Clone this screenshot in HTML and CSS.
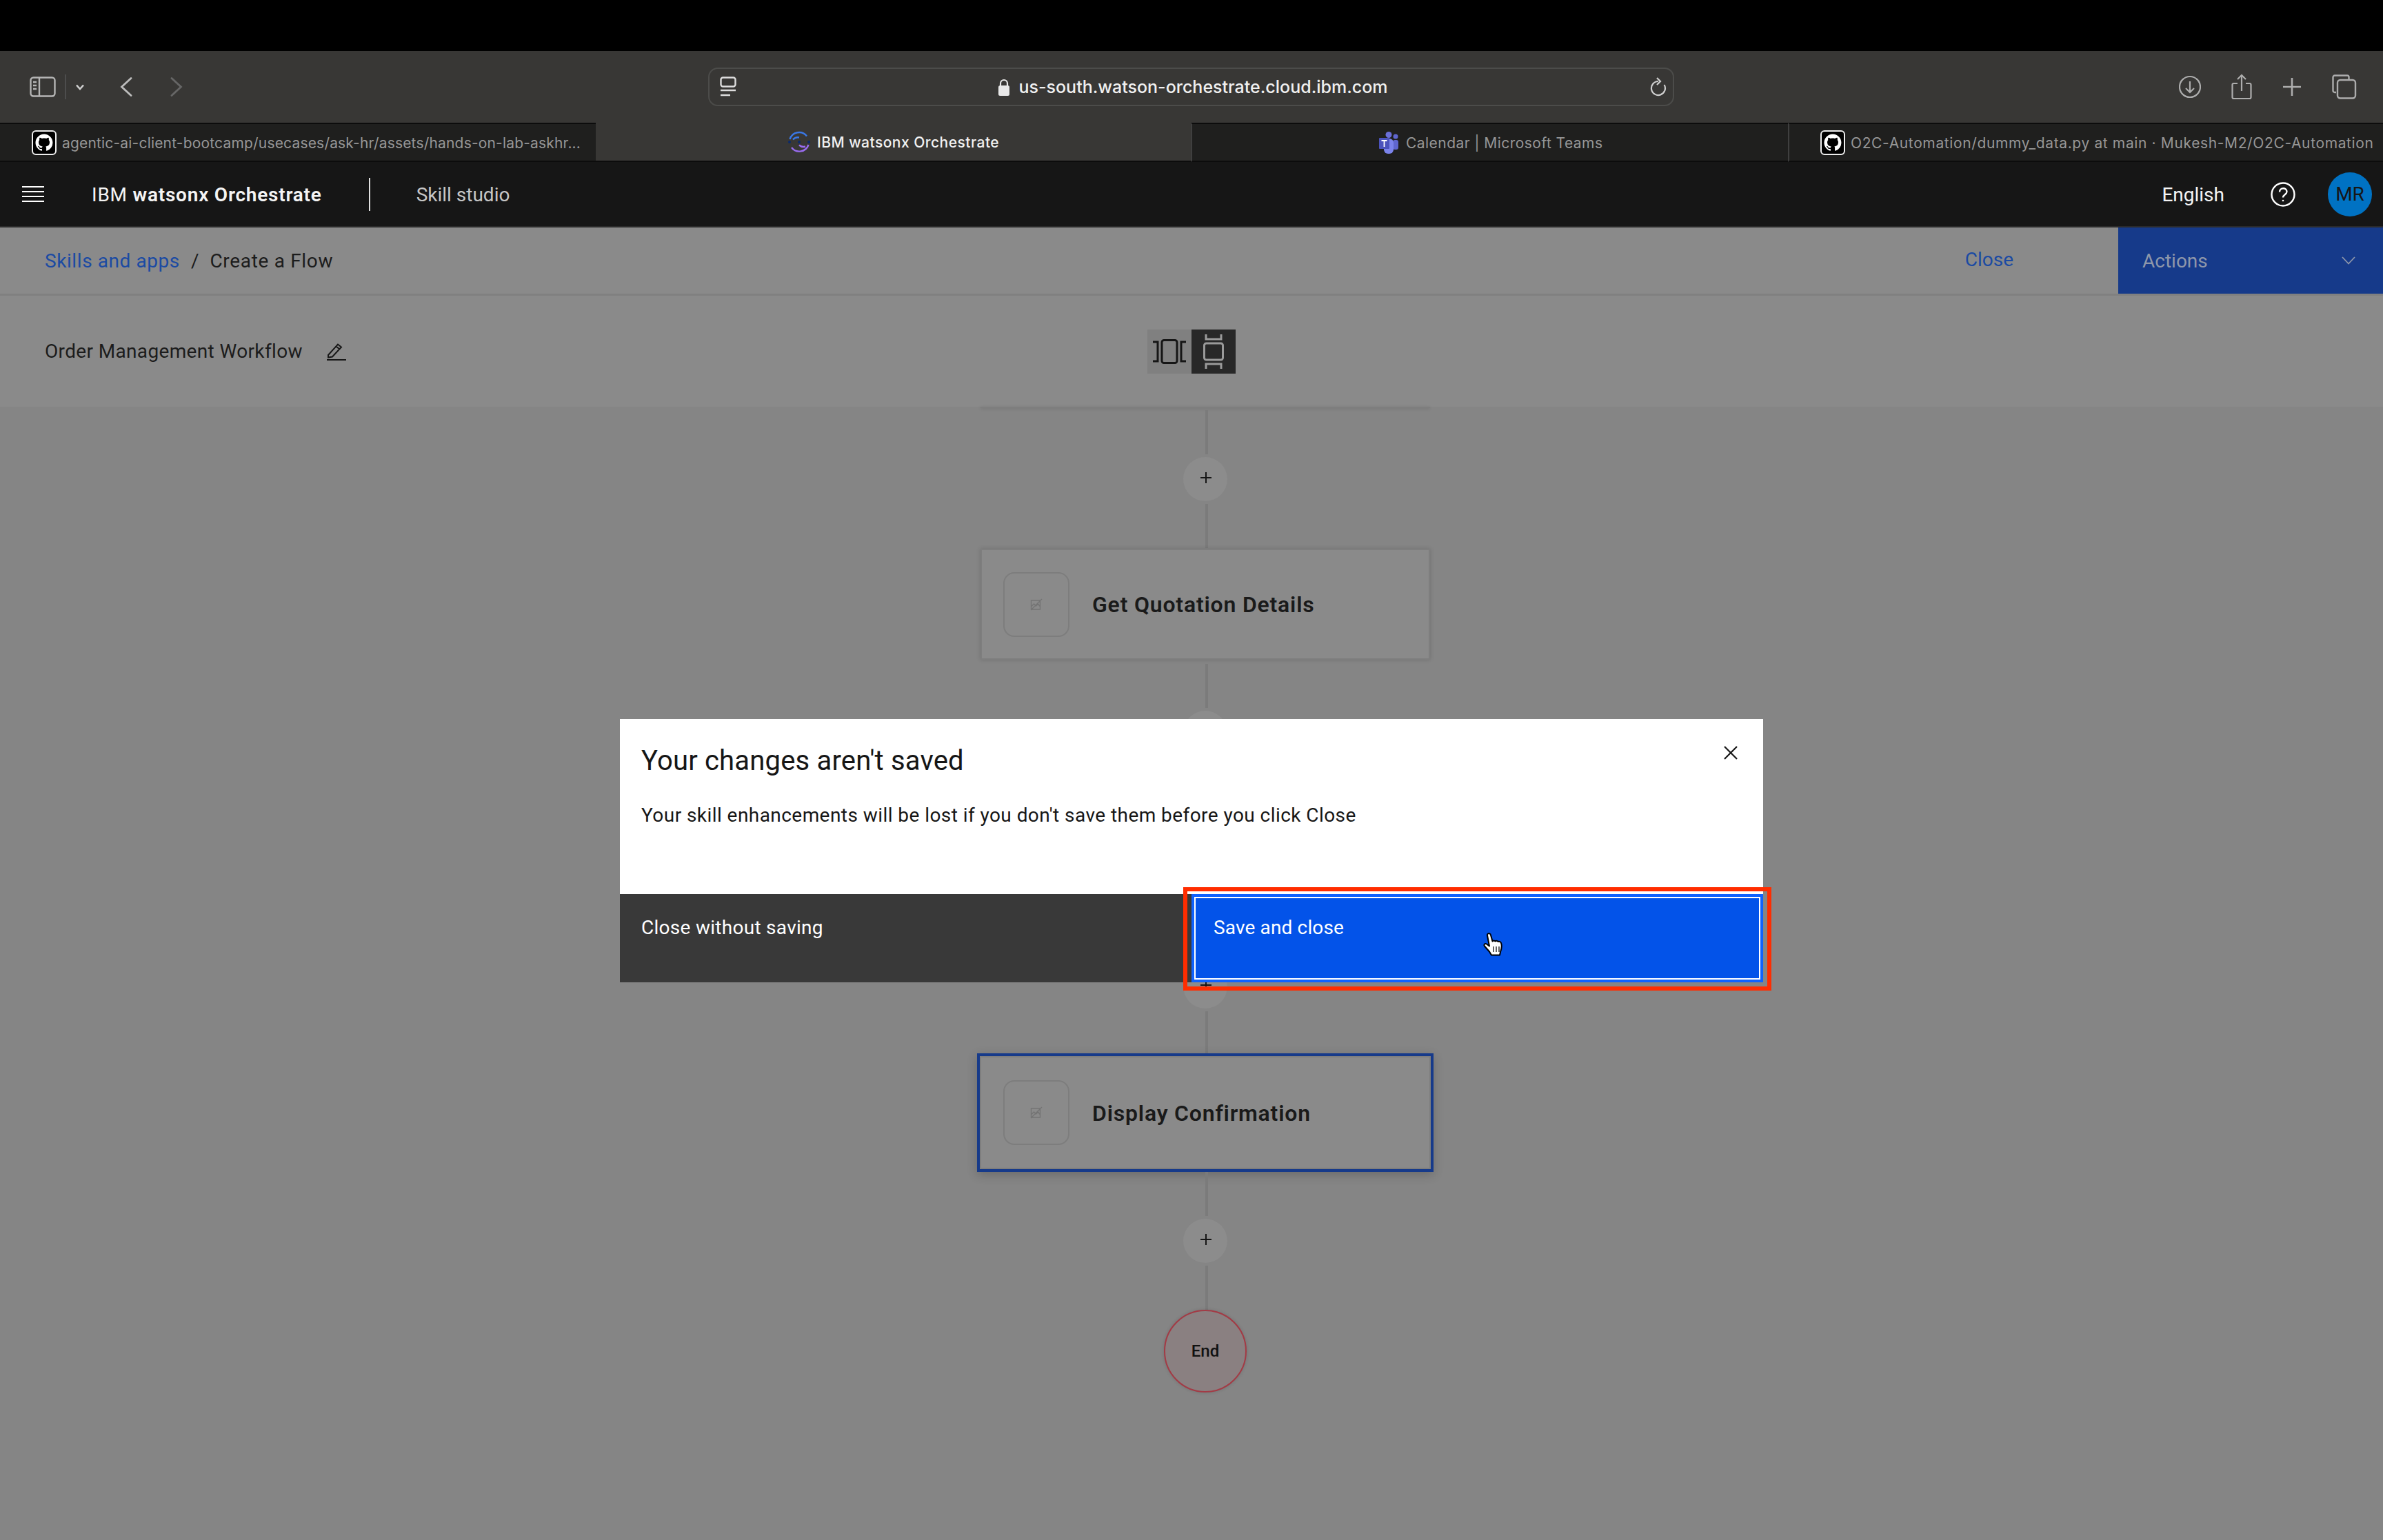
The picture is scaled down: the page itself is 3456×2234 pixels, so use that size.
FILE: index.html
```html
<!DOCTYPE html>
<html lang="en">
<head>
    <meta charset="UTF-8">
    <title>IBM watsonx Orchestrate</title>
    <link rel="stylesheet" href="styles.css">
</head>
<body>
    <svg class="defs" width="0" height="0">
        <symbol id="gh" viewBox="0 0 36 36">
            <rect x="1" y="1" width="34" height="34" rx="5" fill="#000" stroke="#eee" stroke-width="2"/>
            <path transform="translate(5.5 5.5) scale(1.56)" fill="#fff" d="M8 0C3.58 0 0 3.58 0 8c0 3.54 2.29 6.53 5.47 7.59.4.07.55-.17.55-.38 0-.19-.01-.82-.01-1.49-2.01.37-2.53-.49-2.69-.94-.09-.23-.48-.94-.82-1.13-.28-.15-.68-.52-.01-.53.63-.01 1.08.58 1.23.82.72 1.21 1.87.87 2.33.66.07-.52.28-.87.51-1.07-1.78-.2-3.64-.89-3.64-3.95 0-.87.31-1.59.82-2.15-.08-.2-.36-1.02.08-2.12 0 0 .67-.21 2.2.82.64-.18 1.32-.27 2-.27.68 0 1.36.09 2 .27 1.53-1.04 2.2-.82 2.2-.82.44 1.1.16 1.92.08 2.12.51.56.82 1.27.82 2.15 0 3.07-1.87 3.75-3.65 3.95.29.25.54.73.54 1.48 0 1.07-.01 1.93-.01 2.2 0 .21.15.46.55.38A8.013 8.013 0 0016 8c0-4.42-3.58-8-8-8z"/>
        </symbol>
        <symbol id="plus" viewBox="0 0 16 16">
            <path d="M8 0v16M0 8h16" stroke="#161616" stroke-width="2" fill="none"/>
        </symbol>
        <symbol id="noimg" viewBox="0 0 18 18">
            <path d="M1.500 3h13v13h-13zM1.500 12l4-4 3 3 3-3 3 4M1 17L17 1" stroke="#747474" stroke-width="1.400" fill="none"/>
        </symbol>
    </svg>

    <div class="topstrip"></div>

    <div class="toolbar">
        <div class="toolbar-left">
            <svg class="sidebar-icon" width="38" height="30" viewBox="0 0 38 30" fill="none" stroke="#b5b5b5" stroke-width="2.400">
                <rect x="1.500" y="1.500" width="35" height="27" rx="4"/>
                <path d="M14 2v26M5 8h5M5 13h5M5 18h5"/>
            </svg>
            <span class="toolbar-sep"></span>
            <svg class="small-chev" width="14" height="9" viewBox="0 0 14 9" fill="none" stroke="#cfcfcf" stroke-width="2.600"><path d="M2 1.500l5 5.500 5-5.500"/></svg>
            <svg class="nav-back" width="18" height="28" viewBox="0 0 18 28" fill="none" stroke="#bdbdbd" stroke-width="2.800" stroke-linecap="round"><path d="M16 1.500L2.500 14 16 26.500"/></svg>
            <svg class="nav-fwd" width="18" height="28" viewBox="0 0 18 28" fill="none" stroke="#666" stroke-width="2.800" stroke-linecap="round"><path d="M2 1.500L15.500 14 2 26.500"/></svg>
        </div>
        <div class="addressbar">
            <svg class="reader-icon" width="24" height="30" viewBox="0 0 24 30" fill="none" stroke="#ddd" stroke-width="2.400">
                <rect x="1.500" y="1.500" width="21" height="13" rx="3"/>
                <path d="M1 20h22M1 27h14"/>
            </svg>
            <div class="url">
                <svg width="18" height="25" viewBox="0 0 18 25"><path d="M4 11V7a5 5 0 0110 0v4" fill="none" stroke="#e8e8e8" stroke-width="2.200"/><rect x="1" y="10" width="16" height="15" rx="2.500" fill="#e8e8e8"/></svg>
                <span>us-south.watson-orchestrate.cloud.ibm.com</span>
            </div>
            <svg class="reload-icon" width="26" height="28" viewBox="0 0 26 28" fill="none" stroke="#cfcfcf" stroke-width="2.200">
                <path d="M13 6a10 10 0 108.600 5"/>
                <path d="M11 1l5 5-5 5"/>
            </svg>
        </div>
        <div class="toolbar-right">
            <svg width="32" height="34" viewBox="0 0 32 34" fill="none" stroke="#adadad" stroke-width="2.200">
                <circle cx="16" cy="17" r="15"/>
                <path d="M16 9v16M10 19l6 6 6-6"/>
            </svg>
            <svg width="30" height="38" viewBox="0 0 30 38" fill="none" stroke="#adadad" stroke-width="2.200">
                <path d="M9 14H3.500a2 2 0 00-2 2v18a2 2 0 002 2h23a2 2 0 002-2V16a2 2 0 00-2-2H21"/>
                <path d="M15 25V2M9 8l6-6 6 6"/>
            </svg>
            <svg width="28" height="28" viewBox="0 0 28 28" fill="none" stroke="#adadad" stroke-width="2.600"><path d="M14 1v26M1 14h26"/></svg>
            <svg width="36" height="36" viewBox="0 0 36 36" fill="none" stroke="#adadad" stroke-width="2.400">
                <path d="M6 26H4a2.500 2.500 0 01-2.500-2.500V4A2.500 2.500 0 014 1.500h18A2.500 2.500 0 0124.500 4v3"/>
                <rect x="8" y="8" width="26" height="26.500" rx="4"/>
            </svg>
        </div>
    </div>

    <div class="tabs">
        <div class="tab tab-gh-left">
            <svg width="36" height="36"><use href="#gh"/></svg>
            <span>agentic-ai-client-bootcamp/usecases/ask-hr/assets/hands-on-lab-askhr...</span>
        </div>
        <div class="tab tab-active">
            <svg width="32" height="32" viewBox="0 0 32 32" fill="none" stroke-width="2.400">
                <defs>
                    <linearGradient id="wx" x1="0" y1="0" x2="0" y2="1">
                        <stop offset="0" stop-color="#2f6fe0"/>
                        <stop offset="1" stop-color="#9a6cf0"/>
                    </linearGradient>
                </defs>
                <path d="M2.500 12A14 14 0 0127 7.500" stroke="#3a78e6"/>
                <path d="M7 12.500a9.500 9.500 0 019-3" stroke="#3a78e6"/>
                <path d="M5 24A14 14 0 0029.500 20" stroke="#9a6cf0"/>
                <path d="M16 20.500a9.500 9.500 0 009 2" stroke="#9a6cf0"/>
                <circle cx="2" cy="16" r="2" fill="#0b2a6b"/>
                <circle cx="16" cy="16" r="2" fill="#0b2a6b"/>
                <circle cx="30" cy="16" r="2" fill="#0b2a6b"/>
            </svg>
            <span>IBM watsonx Orchestrate</span>
        </div>
        <div class="tab tab-teams">
            <svg width="28" height="32" viewBox="0 0 28 32">
                <circle cx="14" cy="4.500" r="4.500" fill="#6a6fd8"/>
                <circle cx="24" cy="7" r="3.500" fill="#5f66cf"/>
                <rect x="20" y="12" width="8" height="14" rx="3" fill="#5f66cf"/>
                <rect x="7" y="10" width="14" height="22" rx="6" fill="#7b83eb"/>
                <rect x="0" y="9" width="15" height="16" rx="1" fill="#4b53bc"/>
                <path d="M3.500 13h8M7.500 13v9" stroke="#fff" stroke-width="1.800"/>
            </svg>
            <span>Calendar | Microsoft Teams</span>
        </div>
        <div class="tab tab-gh-right">
            <svg width="36" height="36"><use href="#gh"/></svg>
            <span>O2C-Automation/dummy_data.py at main · Mukesh-M2/O2C-Automation</span>
        </div>
    </div>

    <header class="appnav">
        <div class="hamburger"><i></i><i></i><i></i><i></i></div>
        <div class="brand">IBM <b>watsonx Orchestrate</b></div>
        <span class="brand-sep"></span>
        <div class="section-name">Skill studio</div>
        <div class="appnav-right">
            <span class="lang">English</span>
            <svg class="help" width="36" height="36" viewBox="0 0 36 36" fill="none" stroke="#fff" stroke-width="2.400">
                <circle cx="18" cy="18" r="16.500"/>
                <path d="M13 14.500c0-7 10.500-7 10.500-.5 0 4.500-5.500 4-5.500 8.500"/>
                <circle cx="18" cy="27" r="1.300" fill="#fff" stroke="none"/>
            </svg>
            <span class="avatar">MR</span>
        </div>
    </header>

    <div class="crumbbar">
        <nav class="crumbs">
            <a href="#">Skills and apps</a>
            <span class="crumb-slash">/</span>
            <span class="crumb-current">Create a Flow</span>
        </nav>
        <a href="#" class="close-link">Close</a>
        <div class="actions-btn">
            <span>Actions</span>
            <svg width="20" height="12" viewBox="0 0 20 12" fill="none" stroke="#8e97aa" stroke-width="1.800"><path d="M1 1l9 9.500L19 1"/></svg>
        </div>
    </div>

    <div class="titlebar">
        <div class="flow-name">
            <span>Order Management Workflow</span>
            <svg width="28" height="26" viewBox="0 0 28 26" fill="none" stroke="#161616" stroke-width="2">
                <path d="M2 18L16 2.500l5 4L8 20.500l-6 1zM13.500 5.500l5 4"/>
                <path d="M0 25h28"/>
            </svg>
        </div>
        <div class="orient">
            <div class="orient-btn">
                <svg width="48" height="36" viewBox="0 0 48 36" fill="none" stroke="#161616" stroke-width="3">
                    <path d="M0 4h7v28H0"/>
                    <rect x="13" y="1.500" width="22" height="33" rx="3"/>
                    <path d="M48 4h-7v28h7"/>
                </svg>
            </div>
            <div class="orient-btn orient-on">
                <svg width="30" height="50" viewBox="0 0 30 50" fill="none" stroke="#9a9a9a" stroke-width="3">
                    <path d="M4 0v7h22V0"/>
                    <rect x="1.500" y="13" width="27" height="24" rx="3"/>
                    <path d="M4 50v-7h22v7"/>
                </svg>
            </div>
        </div>
    </div>

    <main class="canvas">
        <div class="card-edge"></div>
        <div class="wire"></div>
        <div class="add-node"><svg width="16" height="16"><use href="#plus"/></svg></div>
        <div class="wire"></div>
        <div class="card">
            <div class="card-thumb"><svg width="18" height="18"><use href="#noimg"/></svg></div>
            <div class="card-title">Get Quotation Details</div>
        </div>
        <div class="wire wire-after"></div>
        <div class="add-node"><svg width="16" height="16"><use href="#plus"/></svg></div>
        <div class="wire"></div>
        <div class="card"></div>
        <div class="wire wire-after"></div>
        <div class="add-node"><svg width="16" height="16"><use href="#plus"/></svg></div>
        <div class="wire wire-short"></div>
        <div class="card card-selected">
            <div class="card-thumb"><svg width="18" height="18"><use href="#noimg"/></svg></div>
            <div class="card-title">Display Confirmation</div>
        </div>
        <div class="wire"></div>
        <div class="add-node"><svg width="16" height="16"><use href="#plus"/></svg></div>
        <div class="wire"></div>
        <div class="end-node">End</div>
    </main>

    <!-- unsaved changes dialog -->
    <section class="modal">
        <div class="modal-body">
            <h2>Your changes aren't saved</h2>
            <p>Your skill enhancements will be lost if you don't save them before you click Close</p>
            <svg class="modal-x" width="20" height="20" viewBox="0 0 20 20" fill="none" stroke="#161616" stroke-width="2.200"><path d="M1 1l18 18M19 1L1 19"/></svg>
        </div>
        <div class="modal-foot">
            <button class="btn-dark">Close without saving</button>
            <button class="btn-blue">Save and close</button>
        </div>
    </section>

    <div class="highlight"></div>

    <svg class="hand" width="30" height="34" viewBox="0 0 30 34">
        <path d="M7 1.500c1.500-1 3.500 0 4 2l2.500 9c1-1.500 3-1.500 4 0 1-1 3-1 4 .5 1.500-.8 3.500 0 4.500 2 1.500 4 .5 9-1 13l-1 4.500H12l-3-5-7-8c-1.500-2 .5-4.500 3-3l4 3L6 4c-.3-1 .3-2 1-2.500z" fill="#fff" stroke="#000" stroke-width="2" stroke-linejoin="round"/>
        <path d="M15 20v8M19 20v8M23 20v8" stroke="#333" stroke-width="1.500"/>
    </svg>
</body>
</html>
```

FILE: styles.css
```css
* {
    box-sizing: border-box;
}
body {
    font-family: Roboto, Arial, sans-serif;
    background-color: #858585;
    margin: 0;
    width: 3456px;
    height: 2234px;
    overflow: hidden;
    position: relative;
    color: #161616;
}
a {
    text-decoration: none;
}
.defs {
    position: absolute;
}
.topstrip {
    height: 74px;
    background-color: #000;
}

/* browser toolbar */
.toolbar {
    height: 104px;
    background-color: #383735;
    display: flex;
    align-items: center;
}
.toolbar-left {
    width: 1027px;
    display: flex;
    align-items: center;
    padding-left: 43px;
}
.toolbar-sep {
    width: 2px;
    height: 36px;
    background-color: #4d4d4d;
    margin-left: 13px;
}
.small-chev {
    margin-left: 13px;
}
.nav-back {
    margin-left: 51px;
}
.nav-fwd {
    margin-left: 55px;
}
.addressbar {
    width: 1401px;
    height: 56px;
    border: 2px solid #4c4c4a;
    border-radius: 14px;
    display: flex;
    align-items: center;
    padding: 0 8px 0 15px;
}
.url {
    flex: 1;
    display: flex;
    align-items: center;
    justify-content: center;
    gap: 12px;
    font-family: Inter, Arial, sans-serif;
    font-size: 25px;
    font-weight: 500;
    color: #f0f0f0;
}
.toolbar-right {
    flex: 1;
    display: flex;
    align-items: center;
    gap: 44px;
    padding-left: 732px;
}

/* browser tabs */
.tabs {
    height: 57px;
    display: grid;
    grid-template-columns: 864px 863px 866px 863px;
    font-family: Inter, Arial, sans-serif;
    font-size: 21px;
    color: #969696;
}
.tab {
    background-color: #1f1f1e;
    display: flex;
    align-items: center;
    border-top: 2px solid #0c0c0c;
    border-bottom: 2px solid #0c0c0c;
    border-left: 2px solid #3f3f3f;
    white-space: nowrap;
    overflow: hidden;
}
.tab span {
    margin-left: 8px;
    padding-top: 2px;
}
.tab-gh-left {
    padding-left: 46px;
    border-left: none;
    letter-spacing: 0.18px;
}
.tab-active {
    background-color: #383735;
    color: #f2f2f2;
    font-weight: 500;
    padding-left: 279px;
    border-left: none;
    border-top: none;
    letter-spacing: 0.48px;
}
.tab-active span {
    margin-left: 10px;
}
.tab-teams {
    padding-left: 271px;
    letter-spacing: 0.46px;
}
.tab-teams span {
    margin-left: 11px;
}
.tab-gh-right {
    padding-left: 45px;
    letter-spacing: 0.63px;
}

/* ibm top bar */
.appnav {
    height: 95px;
    background-color: #161616;
    border-bottom: 2px solid #2b2b2b;
    display: flex;
    align-items: center;
    color: #f4f4f4;
    font-size: 28px;
}
.hamburger {
    width: 32px;
    height: 24px;
    margin-left: 32px;
    display: flex;
    flex-direction: column;
    justify-content: space-between;
}
.hamburger i {
    height: 2px;
    background-color: #fff;
}
.brand {
    margin-left: 69px;
    letter-spacing: 0.77px;
    padding-top: 1px;
}
.brand b {
    font-weight: 600;
}
.brand-sep {
    width: 2px;
    height: 48px;
    background-color: #e0e0e0;
    margin-left: 68px;
}
.section-name {
    margin-left: 67px;
    color: #c6c6c6;
    padding-top: 1px;
}
.appnav-right {
    margin-left: auto;
    display: flex;
    align-items: center;
    padding-right: 16px;
}
.lang {
    padding-top: 1px;
}
.help {
    margin-left: 67px;
}
.avatar {
    width: 64px;
    height: 64px;
    border-radius: 50%;
    background-color: #0072c3;
    color: #161616;
    margin-left: 47px;
    display: flex;
    align-items: center;
    justify-content: center;
}

/* breadcrumb row */
.crumbbar {
    height: 99px;
    background-color: #8a8a8a;
    border-bottom: 3px solid #808080;
    display: flex;
    font-size: 28px;
}
.crumbs {
    flex: 1;
    display: flex;
    align-items: center;
    padding-left: 65px;
    color: #1c1c1c;
}
.crumbs a {
    color: #1b4aa3;
    letter-spacing: 0.58px;
}
.crumb-slash {
    margin: 0 16px;
}
.crumb-current {
    letter-spacing: 0.67px;
}
.close-link {
    color: #1b4aa3;
    margin: 30px 152px 0 0;
}
.actions-btn {
    width: 384px;
    height: 96px;
    background-color: #163a8a;
    color: #8e97aa;
    display: flex;
    align-items: center;
    justify-content: space-between;
    padding: 0 40px 0 35px;
}

/* flow name + orientation toggle */
.titlebar {
    height: 161px;
    background-color: #8a8a8a;
    display: grid;
    grid-template-columns: 1fr auto 1fr;
    align-items: center;
    font-size: 28px;
    color: #1c1c1c;
}
.flow-name {
    display: flex;
    align-items: center;
    gap: 35px;
    padding-left: 65px;
    letter-spacing: 0.35px;
}
.orient {
    display: flex;
}
.orient-btn {
    width: 64px;
    height: 64px;
    background-color: #808080;
    display: flex;
    align-items: center;
    justify-content: center;
}
.orient-on {
    background-color: #282828;
}

/* the flow itself */
.canvas {
    display: flex;
    flex-direction: column;
    align-items: center;
    padding-left: 40px;
}
.card-edge {
    width: 652px;
    height: 2px;
    background-color: #7e7e7e;
    box-shadow: 0 1px 4px rgba(0, 0, 0, 0.15);
    margin-bottom: 3px;
}
.wire {
    width: 4px;
    height: 64px;
    background-color: #7b7b7b;
    margin-left: 4px;
    flex-shrink: 0;
}
.wire-after {
    margin-top: 6px;
}
.wire-short {
    height: 61px;
}
.add-node {
    width: 64px;
    height: 64px;
    border-radius: 50%;
    background-color: #8c8c8c;
    margin: 4px 0;
    display: flex;
    align-items: center;
    justify-content: center;
    padding: 0 0 4px 2px;
    flex-shrink: 0;
}
.card {
    width: 652px;
    height: 161px;
    margin-top: 1px;
    background-color: #8a8a8a;
    border: 2px solid #7e7e7e;
    box-shadow: 0 0 6px rgba(0, 0, 0, 0.16);
    display: flex;
    align-items: center;
    padding-left: 31px;
    flex-shrink: 0;
}
.card-selected {
    width: 662px;
    height: 172px;
    margin-top: 0;
    border: 4px solid #163a8a;
    outline: 2px solid #7e7e7e;
    outline-offset: -6px;
    padding-left: 34px;
    box-shadow: 0 4px 14px rgba(0, 0, 0, 0.2);
}
.card-thumb {
    width: 96px;
    height: 94px;
    border: 2px solid #7d7d7d;
    border-radius: 16px;
    display: flex;
    align-items: center;
    justify-content: center;
}
.card-title {
    font-size: 32px;
    font-weight: 600;
    letter-spacing: 0.8px;
    color: #1a1a1a;
    margin-left: 33px;
    padding-top: 1px;
}
.end-node {
    width: 120px;
    height: 120px;
    border-radius: 50%;
    background-color: #8a8081;
    border: 2px solid #a33a45;
    box-shadow: 0 0 5px rgba(0, 0, 0, 0.15);
    display: flex;
    align-items: center;
    justify-content: center;
    font-size: 24px;
    font-weight: 500;
    color: #111;
    flex-shrink: 0;
}

/* modal */
.modal {
    position: absolute;
    left: 899px;
    top: 1043px;
    width: 1658px;
    height: 382px;
    background-color: #fff;
    display: flex;
    flex-direction: column;
}
.modal-body {
    flex: 1;
    position: relative;
    padding: 33px 31px 0;
}
.modal-body h2 {
    margin: 0;
    font-size: 40px;
    line-height: 56px;
    font-weight: 400;
    letter-spacing: 0.18px;
}
.modal-body p {
    margin: 31px 0 0;
    font-size: 28px;
    line-height: 40px;
    letter-spacing: 0.44px;
}
.modal-x {
    position: absolute;
    top: 39px;
    right: 37px;
}
.modal-foot {
    height: 128px;
    display: grid;
    grid-template-columns: 829px 829px;
}
.modal-foot button {
    border: none;
    margin: 0;
    font-family: inherit;
    font-size: 28px;
    line-height: 40px;
    color: #fff;
    text-align: left;
}
.btn-dark {
    background-color: #393939;
    padding: 29px 31px 59px;
    letter-spacing: 0.28px;
}
.modal-foot .btn-blue {
    background-color: #0353e9;
    border: 4px solid #0f62fe;
    outline: 2px solid #fff;
    outline-offset: -6px;
    padding: 25px 28px 55px;
    letter-spacing: 0.15px;
}

/* annotation over the screenshot */
.highlight {
    position: absolute;
    left: 1716px;
    top: 1287px;
    width: 853px;
    height: 150px;
    border: 6px solid #ff2d00;
}
.hand {
    position: absolute;
    left: 2151px;
    top: 1353px;
}
```
